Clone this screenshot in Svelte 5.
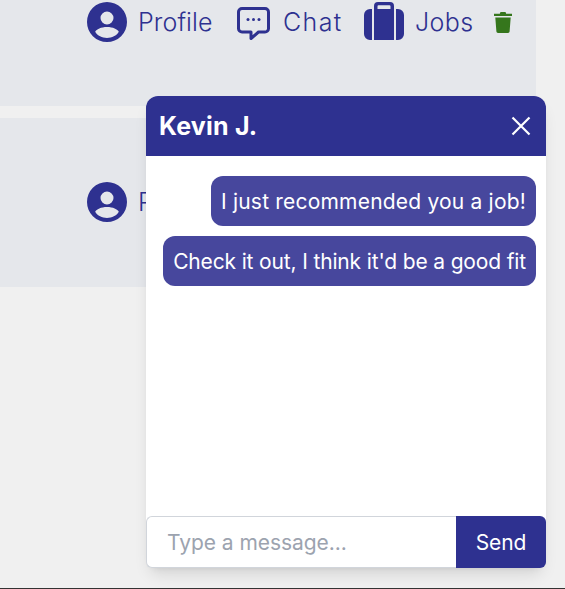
<script>
	let draft = $state('');
	const messages = ['I just recommended you a job!', "Check it out, I think it'd be a good fit"];
</script>

{#snippet profile()}
	<svg class="icon" viewBox="0 0 40 40" width="40" height="40">
		<path fill="#2e3190" fill-rule="evenodd" d="M20 0a20 20 0 1 1 0 40a20 20 0 1 1 0-40zM20 9.500a6.500 6.500 0 1 0 0 13a6.500 6.500 0 1 0 0-13zM20 25c-6 0-10.500 2.300-11.800 4.800C10.500 33.800 15 36 20 36s9.500-2.200 11.800-6.200C30.500 27.300 26 25 20 25z" />
	</svg>
{/snippet}

<main class="page">
	<section class="card first">
		<div class="actions">
			<a class="action" href="#profile">{@render profile()}<span>Profile</span></a>
			<a class="action chat" href="#chat">
				<svg class="icon" viewBox="0 0 36 36" width="36" height="36">
					<path fill="none" stroke="#2e3190" stroke-width="3" stroke-linejoin="round" d="M6 4.500h23a3.500 3.500 0 0 1 3.500 3.500v16.500a3.500 3.500 0 0 1-3.500 3.500h-6.500L15 34.500V28H6a3.500 3.500 0 0 1-3.500-3.500V8A3.500 3.500 0 0 1 6 4.500z" />
					<circle cx="12" cy="15.500" r="1.500" fill="#2e3190" />
					<circle cx="17.500" cy="15.500" r="1.500" fill="#2e3190" />
					<circle cx="23" cy="15.500" r="1.500" fill="#2e3190" />
				</svg>
				<span>Chat</span>
			</a>
			<a class="action jobs" href="#jobs">
				<svg class="icon" viewBox="0 0 40 40" width="40" height="40">
					<path fill="#2e3190" fill-rule="evenodd" d="M14 0h12a4 4 0 0 1 4 4V38H10V4a4 4 0 0 1 4-4zM14.500 3.300a1 1 0 0 0-1 1V7h13V4.300a1 1 0 0 0-1-1z" />
					<path fill="#2e3190" d="M6 7h2v31H6A6 6 0 0 1 0 32V13a6 6 0 0 1 6-6zM32 7h2a6 6 0 0 1 6 6v19a6 6 0 0 1-6 6h-2z" />
				</svg>
				<span>Jobs</span>
			</a>
			<button class="trash" aria-label="Delete">
				<svg viewBox="0 0 18 21" width="18" height="21">
					<path fill="#35761c" d="M6.500 0h5l.7 1.700H18v2.400H0V1.700h5.800zM1.300 5.500h15.400l-1.100 14a1.600 1.600 0 0 1-1.600 1.500H4a1.600 1.600 0 0 1-1.600-1.500z" />
				</svg>
			</button>
		</div>
	</section>

	<section class="card second">
		<div class="actions">
			<a class="action" href="#profile">{@render profile()}<span>Profile</span></a>
		</div>
	</section>
</main>

<aside class="chat-box">
	<header>
		<h2>Kevin J.</h2>
		<button class="close" aria-label="Close">
			<svg viewBox="0 0 20 20" width="20" height="20">
				<path stroke="#fff" stroke-width="2.200" d="M1.500 1.500l17 17M18.500 1.500l-17 17" />
			</svg>
		</button>
	</header>
	<div class="messages">
		{#each messages as message}
			<p class="bubble">{message}</p>
		{/each}
	</div>
	<form class="composer" onsubmit={(e) => e.preventDefault()}>
		<input type="text" bind:value={draft} placeholder="Type a message..." />
		<button type="submit">Send</button>
	</form>
</aside>

<style>
	:global(body) {
		background: #f0f0f0;
		font-family: Inter, "Liberation Sans", sans-serif;
		border-bottom: 1px solid #333;
		height: 588px;
		overflow: hidden;
	}
	.page {
		width: 536px;
		display: flex;
		flex-direction: column;
		gap: 12px;
	}
	.card {
		background: #e5e7eb;
	}
	.first {
		height: 106px;
		padding-top: 2px;
		box-sizing: border-box;
	}
	.second {
		height: 169px;
		padding-top: 64px;
		box-sizing: border-box;
	}
	.actions {
		display: flex;
		align-items: center;
		height: 40px;
		padding-left: 87px;
	}
	.action {
		display: flex;
		align-items: center;
		gap: 11px;
		color: #2e3190;
		text-decoration: none;
		font-size: 25px;
		font-weight: 300;
		letter-spacing: 0.1px;
		width: 149px;
		flex: none;
	}
	.action.chat {
		width: 128px;
		letter-spacing: 1.4px;
	}
	.action.jobs {
		width: 130px;
		letter-spacing: 0.4px;
	}
	.icon {
		flex: none;
	}
	.trash {
		background: none;
		border: none;
		padding: 0;
		height: 21px;
		display: flex;
	}
	.chat-box {
		position: absolute;
		left: 146px;
		top: 96px;
		width: 400px;
		height: 472px;
		background: #fff;
		border-radius: 12px;
		box-shadow: 0 10px 15px -3px rgba(0, 0, 0, 0.1), 0 4px 6px -4px rgba(0, 0, 0, 0.1);
		display: flex;
		flex-direction: column;
	}
	header {
		height: 60px;
		flex: none;
		background: #2e3190;
		border-radius: 12px 12px 0 0;
		display: flex;
		align-items: center;
		justify-content: space-between;
		padding: 0 15px 0 13px;
	}
	h2 {
		margin: 0;
		color: #fff;
		font-size: 25px;
		font-weight: 700;
		letter-spacing: 0.2px;
	}
	.close {
		background: none;
		border: none;
		padding: 0;
		display: flex;
	}
	.messages {
		flex: 1;
		display: flex;
		flex-direction: column;
		align-items: flex-end;
		gap: 10px;
		padding: 20px 10px 0;
	}
	.bubble {
		margin: 0;
		height: 50px;
		box-sizing: border-box;
		padding: 0 10px;
		display: flex;
		align-items: center;
		background: #47479d;
		color: #fff;
		border-radius: 12px;
		font-size: 21px;
		letter-spacing: 0.2px;
		white-space: nowrap;
	}
	.bubble:nth-child(2) {
		letter-spacing: -0.15px;
	}
	.composer {
		display: flex;
		height: 52px;
		flex: none;
	}
	input {
		flex: 1;
		min-width: 0;
		box-sizing: border-box;
		border: 1px solid #d1d5db;
		border-right: none;
		border-radius: 6px 0 0 6px;
		padding: 0 20px;
		font: inherit;
		font-size: 21px;
		letter-spacing: -0.05px;
		background: #fff;
		outline: none;
	}
	input::placeholder {
		color: #9ca3af;
		opacity: 1;
	}
	.composer button {
		width: 90px;
		flex: none;
		border: none;
		background: #2e3190;
		color: #fff;
		border-radius: 0 6px 6px 0;
		font: inherit;
		font-size: 21px;
		letter-spacing: -0.1px;
	}
</style>
